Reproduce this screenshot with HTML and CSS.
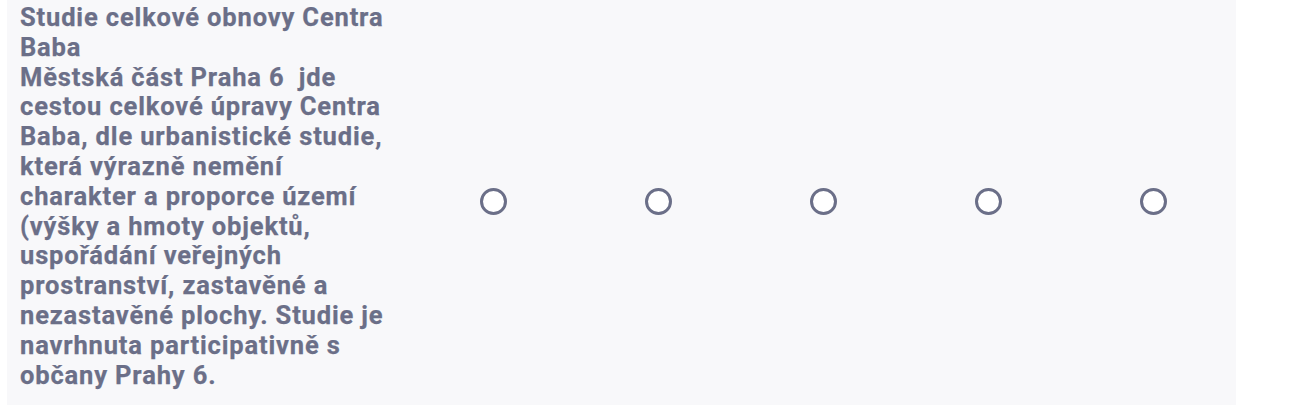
FILE: index.html
```html
<!DOCTYPE html>
<html lang="cs">
<head>
<meta charset="utf-8">
<link rel="stylesheet" href="styles.css">
</head>
<body>
<div class="row">
  <div class="question">Studie celkové obnovy Centra Baba<br>Městská část Praha 6&nbsp; jde cestou celkové úpravy Centra Baba, dle urbanistické studie, která výrazně nemění charakter a proporce území (výšky a hmoty objektů, uspořádání veřejných prostranství, zastavěné a nezastavěné plochy. Studie je navrhnuta participativně s občany Prahy 6.</div>
  <div class="cell"><span class="radio"></span></div>
  <div class="cell"><span class="radio"></span></div>
  <div class="cell"><span class="radio"></span></div>
  <div class="cell"><span class="radio"></span></div>
  <div class="cell"><span class="radio"></span></div>
</div>
</body>
</html>
```
FILE: styles.css
```css
html, body {
  margin: 0;
  padding: 0;
  background: #ffffff;
}
body {
  font-family: Roboto, "Liberation Sans", sans-serif;
}
.row {
  margin-left: 7px;
  width: 1229px;
  height: 405px;
  background: #f8f8fa;
  display: grid;
  grid-template-columns: 404px repeat(5, 1fr);
  align-items: center;
}
.question {
  padding: 0 13px;
  font-size: 25.5px;
  letter-spacing: 0.85px;
  font-weight: 700;
  -webkit-text-stroke: 0.25px #6b6f88;
  line-height: 29.8px;
  color: #6b6f88;
  align-self: start;
  padding-top: 3px;
}
.cell {
  display: flex;
  justify-content: center;
  align-items: center;
}
.radio {
  box-sizing: border-box;
  width: 27px;
  height: 27px;
  border: 3px solid #6b6f88;
  border-radius: 50%;
  background: #ffffff;
  margin-top: -3px;
}
```
